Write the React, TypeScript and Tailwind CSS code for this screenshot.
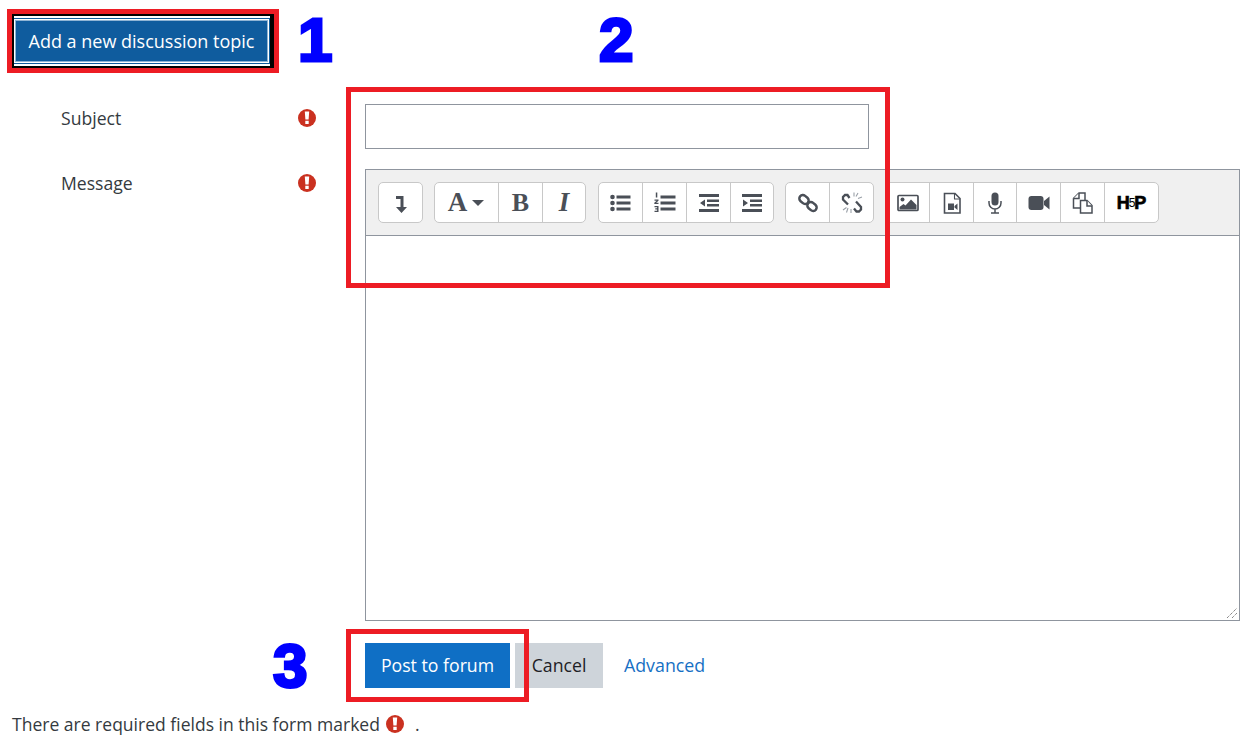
import React from "react";

const ink = "#4a4f57";

function ToolBtn({ w = 44, first = false, children }: { w?: number; first?: boolean; children: React.ReactNode }) {
  return (
    <div
      style={{ width: w }}
      className={`flex h-full items-center justify-center ${first ? "" : "border-l border-[#c8c8c8]"}`}
    >
      {children}
    </div>
  );
}

function Group({ className = "", children }: { className?: string; children: React.ReactNode }) {
  return (
    <div className={`flex h-[41px] overflow-hidden rounded-[5px] border border-[#c8c8c8] bg-white ${className}`}>
      {children}
    </div>
  );
}

function Required({ className = "" }: { className?: string }) {
  return (
    <svg width="18" height="18" viewBox="0 0 18 18" className={className}>
      <circle cx="9" cy="9" r="9" fill="#ca3120" />
      <path d="M6.800 2.600h4.400l-.6 8h-3.200zM7.300 11.800h3.400v3.300H7.300z" fill="#fff" />
    </svg>
  );
}

function Glyph({ children }: { children: React.ReactNode }) {
  return (
    <svg width="24" height="24" viewBox="0 0 24 24" fill={ink}>
      {children}
    </svg>
  );
}

export default function App() {
  return (
    <div className="relative h-[752px] w-[1253px] overflow-hidden bg-white font-['Open_Sans','Noto_Sans',sans-serif] text-[17.6px] text-[#343a40]">
      <div className="pl-[15px] pt-[20px]">
        <button className="block h-[42px] w-[253px] border border-[#8fb4d4] bg-[#0f5c9e] text-center text-[18px] text-white shadow-[0_0_0_1px_#fff,0_0_0_2px_#0f5c9e,0_0_0_3px_#fff]">
          Add a new discussion topic
        </button>
      </div>

      <div className="mt-[42px] flex pl-[61px]">
        <div className="flex h-[45px] w-[304px] items-start pt-[1px]">
          <span className="w-[237px] leading-[26px]">Subject</span>
          <Required className="mt-[4px]" />
        </div>
        <div className="h-[45px] w-[504px] border border-[#8f959e] bg-white" />
      </div>

      <div className="mt-[20px] flex pl-[61px]">
        <div className="flex w-[304px] items-start pt-[1px]">
          <span className="w-[237px] leading-[26px]">Message</span>
          <Required className="mt-[4px]" />
        </div>
        <div className="flex h-[452px] w-[875px] flex-col border border-[#8f959e]">
          <div className="flex h-[66px] gap-[11px] border-b border-[#8f959e] bg-[#f0f0f0] pl-[12px] pt-[12px]">
            <Group>
              <ToolBtn first w={43}>
                <Glyph>
                  <path d="M7 5h7.500v11H18l-5.500 6-5.500-6h4.500V8H7z" />
                </Glyph>
              </ToolBtn>
            </Group>
            <Group>
              <ToolBtn first w={63}>
                <span className="font-['Liberation_Serif',serif] text-[27px] font-bold leading-none text-[#4a4f57]">A</span>
                <svg width="14" height="8" viewBox="0 0 14 8" className="ml-[4px]" fill={ink}>
                  <path d="M1 1h12L7 7z" />
                </svg>
              </ToolBtn>
              <ToolBtn>
                <span className="font-['Liberation_Serif',serif] text-[26px] font-bold leading-none text-[#4a4f57]">B</span>
              </ToolBtn>
              <ToolBtn w={43}>
                <span className="font-['Liberation_Serif',serif] text-[27px] font-bold italic leading-none text-[#4a4f57]">I</span>
              </ToolBtn>
            </Group>
            <Group className="ml-[1px]">
              <ToolBtn first w={43}>
                <Glyph>
                  <circle cx="3.500" cy="6" r="2.300" />
                  <circle cx="3.500" cy="12" r="2.300" />
                  <circle cx="3.500" cy="18" r="2.300" />
                  <path d="M7.500 4.500h14v3h-14zM7.500 10.500h14v3h-14zM7.500 16.500h14v3h-14z" />
                </Glyph>
              </ToolBtn>
              <ToolBtn>
                <Glyph>
                  <path d="M7.500 4.500h15v3h-15zM7.500 10.500h15v3h-15zM7.500 16.500h15v3h-15z" />
                  <path d="M2.800 1.500h1.500v5H2.800zM1.500 8.500h4v1.300l-2.300 2h2.300v1.200H1.300v-1.200l2.400-2H1.500zM1.500 15h4v6h-4v-1.200h2.600v-1.300H2.300v-1.200h1.800v-1.100H1.500z" />
                </Glyph>
              </ToolBtn>
              <ToolBtn>
                <Glyph>
                  <path d="M2 3h20v3H2zM10 8.500h12v2.500H10zM10 13h12v2.500H10zM2 18h20v3H2zM8 8.500v7l-5-3.500z" />
                </Glyph>
              </ToolBtn>
              <ToolBtn w={43}>
                <Glyph>
                  <path d="M2 3h20v3H2zM10 8.500h12v2.500H10zM10 13h12v2.500H10zM2 18h20v3H2zM3 8.500v7l5-3.500z" />
                </Glyph>
              </ToolBtn>
            </Group>
            <Group>
              <ToolBtn first w={43}>
                <Glyph>
                  <g fill="none" stroke={ink} strokeWidth="2.500">
                    <rect x="3" y="5" width="10" height="7" rx="3.500" transform="rotate(40 8 8.500)" />
                    <rect x="11" y="12" width="10" height="7" rx="3.500" transform="rotate(40 16 15.500)" />
                  </g>
                </Glyph>
              </ToolBtn>
              <ToolBtn>
                <Glyph>
                  <g fill="none" stroke={ink} strokeWidth="2.300">
                    <path d="M9.500 7L7.500 4H5L3 6v2.500l5 5" />
                    <path d="M14 17.500l2.500 3H19l2-2V16l-5-5.500" />
                  </g>
                  <g stroke="#9aa0a8" strokeWidth="1.100">
                    <path d="M14 1.500v4M18 2l-2 3.500M22 6l-4 1.500M3 19l3.500-2.500M8 17l-1.500 4.500M11 18v4" />
                  </g>
                </Glyph>
              </ToolBtn>
            </Group>
            <Group>
              <ToolBtn first w={43}>
                <Glyph>
                  <rect x="2" y="4.500" width="20" height="15" rx="1" fill="none" stroke={ink} strokeWidth="1.700" />
                  <circle cx="6.500" cy="8.500" r="2" />
                  <path d="M3.500 18.500v-2.500l4-3 2 1.500 5.500-6 5.500 5.500v4.500z" />
                </Glyph>
              </ToolBtn>
              <ToolBtn>
                <Glyph>
                  <path d="M4.500 2.500h10.500l5 5v14.500H4.500z" fill="none" stroke={ink} strokeWidth="1.600" />
                  <path d="M14.500 3v5H20" fill="none" stroke={ink} strokeWidth="1.100" />
                  <path d="M8 12.500h6v6.500H8zM14.500 15l3-2.500v6.500l-3-2.500z" />
                </Glyph>
              </ToolBtn>
              <ToolBtn w={43}>
                <Glyph>
                  <rect x="8.500" y="1.500" width="7" height="13" rx="3.500" />
                  <path d="M6 10v2a6 6 0 0 0 12 0v-2M12 18v3.500M8 22h8" fill="none" stroke={ink} strokeWidth="1.500" />
                </Glyph>
              </ToolBtn>
              <ToolBtn>
                <Glyph>
                  <rect x="1.500" y="5" width="15" height="14" rx="3" />
                  <path d="M17 10l5.500-4.500v13L17 14z" />
                </Glyph>
              </ToolBtn>
              <ToolBtn>
                <Glyph>
                  <g fill="#fff" stroke={ink} strokeWidth="1.500">
                    <path d="M2.500 7.500L8 2h6v10l-4 5H2.500z" />
                    <path d="M8 2v5.500H2.500" />
                    <path d="M9.500 9.500H16l5 5v7.500H9.500z" />
                    <path d="M16 9.500V15h5" />
                  </g>
                </Glyph>
              </ToolBtn>
              <ToolBtn w={54}>
                <span className="flex items-center font-['Liberation_Sans',sans-serif] font-bold leading-none text-black">
                  <span className="text-[18px] [-webkit-text-stroke:0.7px_#000]">H</span>
                  <span className="-mx-[1px] text-[12px] font-normal">5</span>
                  <span className="text-[18px] [-webkit-text-stroke:0.7px_#000]">P</span>
                </span>
              </ToolBtn>
            </Group>
          </div>
          <div className="relative flex-1 bg-white">
            <svg width="12" height="12" viewBox="0 0 12 12" className="absolute bottom-[1px] right-[1px]" stroke="#555" strokeDasharray="1 1">
              <path d="M1 11L11 1M6 11l5-5" />
            </svg>
          </div>
        </div>
      </div>

      <div className="mt-[22px] flex items-center pl-[365px]">
        <button className="h-[45px] w-[145px] bg-[#0f6fc5] text-[17.7px] text-white">Post to forum</button>
        <button className="ml-[5px] h-[45px] w-[88px] bg-[#ced4da] text-[17.7px] text-[#1d2125]">Cancel</button>
        <a className="ml-[21px] text-[17.8px] text-[#1670c4]">Advanced</a>
      </div>

      <div className="mt-[23px] flex items-center pl-[12px] text-[17.55px] leading-[26px]">
        <span>There are required fields in this form marked</span>
        <Required className="ml-[6px]" />
        <span className="ml-[11px]">.</span>
      </div>

      {/* annotations drawn over the form */}
      <div className="absolute left-[7px] top-[9px] h-[64px] w-[272px] border-[5px] border-[#ed1c24]">
        <div className="h-full w-full border-y-[2px] border-l-[2px] border-r-[4px] border-black" />
      </div>
      <div className="absolute left-[346px] top-[87px] h-[201px] w-[544px] border-[5px] border-[#ed1c24]" />
      <div className="absolute left-[346px] top-[629px] h-[73px] w-[183px] border-[5px] border-[#ed1c24]" />

      <span className="absolute left-[298px] top-[3px] font-['Liberation_Sans',sans-serif] text-[62px] font-bold leading-[74px] text-[#0000ff] [-webkit-text-stroke:3px_#0000ff]">1</span>
      <span className="absolute left-[599px] top-[3px] font-['Liberation_Sans',sans-serif] text-[62px] font-bold leading-[74px] text-[#0000ff] [-webkit-text-stroke:3px_#0000ff]">2</span>
      <span className="absolute left-[273px] top-[629px] font-['Liberation_Sans',sans-serif] text-[62px] font-bold leading-[74px] text-[#0000ff] [-webkit-text-stroke:3px_#0000ff]">3</span>
    </div>
  );
}
